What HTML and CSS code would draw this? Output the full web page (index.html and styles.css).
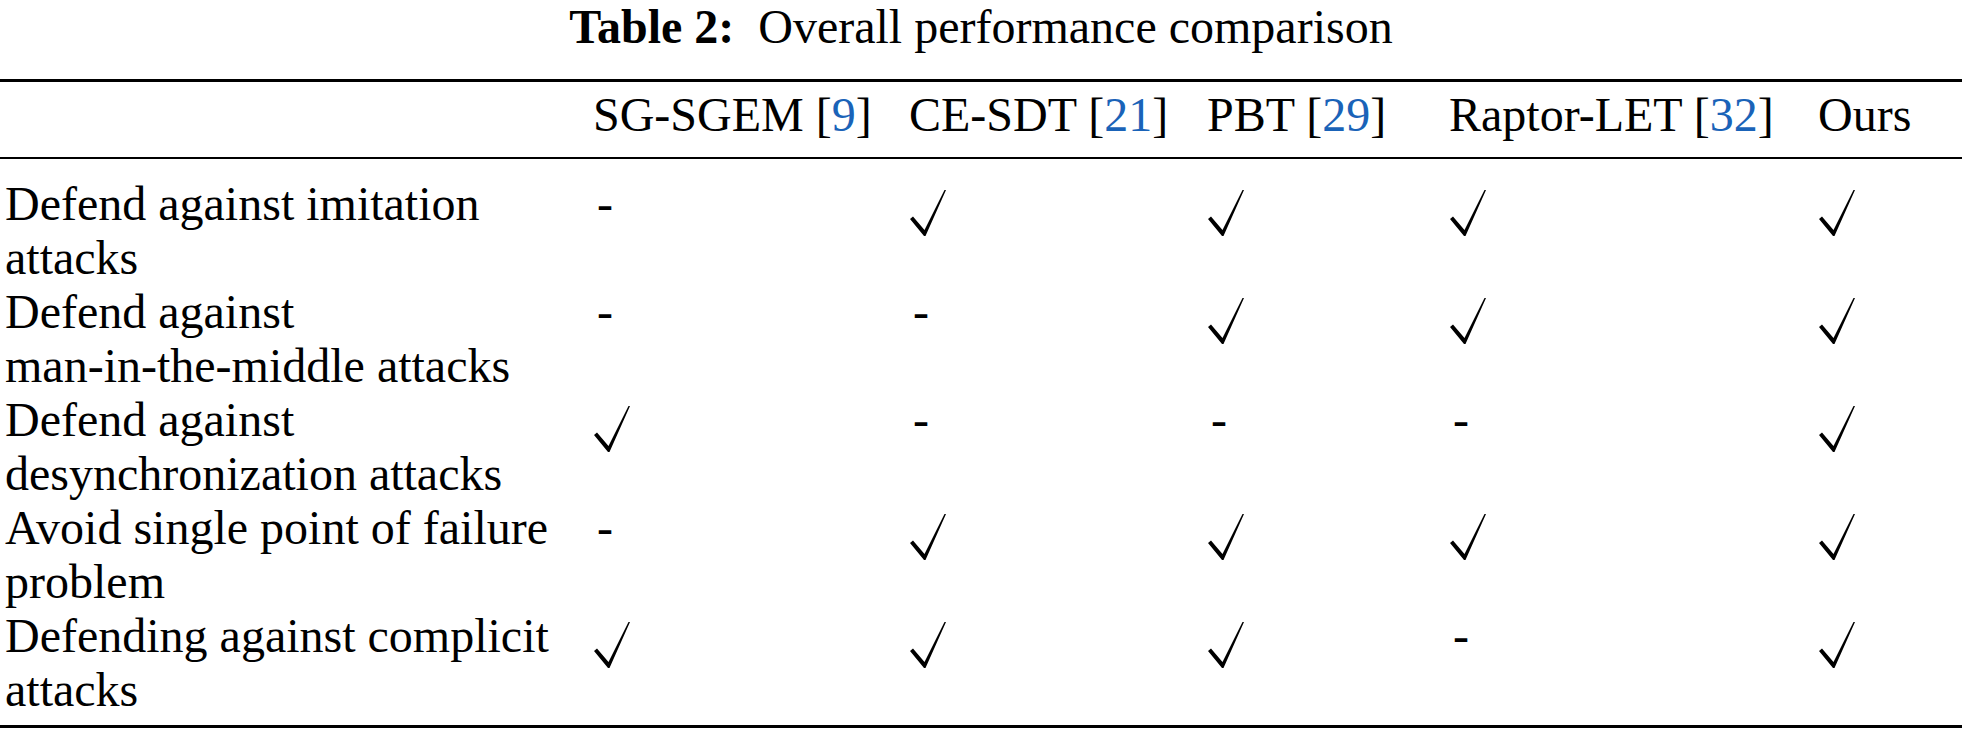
FILE: index.html
```html
<!DOCTYPE html>
<html lang="en">
  <head>
    <meta charset="UTF-8" />
    <meta name="viewport" content="width=device-width, initial-scale=1.0" />
    <title>Table 2: Overall performance comparison</title>
    <link rel="stylesheet" href="styles.css">
  </head>
  <body>
    <div class="table-wrap">
      <div class="caption"><b>Table 2:</b>&nbsp; Overall performance comparison</div>

      <table class="perf">
        <colgroup>
          <col class="c-label" />
          <col class="c-sg" />
          <col class="c-ce" />
          <col class="c-pbt" />
          <col class="c-raptor" />
          <col class="c-ours" />
        </colgroup>
        <thead>
          <tr>
            <th></th>
            <th>SG-SGEM [<span class="ref">9</span>]</th>
            <th>CE-SDT [<span class="ref">21</span>]</th>
            <th>PBT [<span class="ref">29</span>]</th>
            <th>Raptor-LET [<span class="ref">32</span>]</th>
            <th>Ours</th>
          </tr>
        </thead>
        <tbody>
          <!-- yes = check mark, no = dash -->
          <tr>
            <td class="label">Defend against imitation<br />attacks</td>
            <td><span class="no">-</span></td>
            <td><span class="yes"></span></td>
            <td><span class="yes"></span></td>
            <td><span class="yes"></span></td>
            <td><span class="yes"></span></td>
          </tr>
          <tr>
            <td class="label">Defend against<br />man-in-the-middle attacks</td>
            <td><span class="no">-</span></td>
            <td><span class="no">-</span></td>
            <td><span class="yes"></span></td>
            <td><span class="yes"></span></td>
            <td><span class="yes"></span></td>
          </tr>
          <tr>
            <td class="label">Defend against<br />desynchronization attacks</td>
            <td><span class="yes"></span></td>
            <td><span class="no">-</span></td>
            <td><span class="no">-</span></td>
            <td><span class="no">-</span></td>
            <td><span class="yes"></span></td>
          </tr>
          <tr>
            <td class="label">Avoid single point of failure<br />problem</td>
            <td><span class="no">-</span></td>
            <td><span class="yes"></span></td>
            <td><span class="yes"></span></td>
            <td><span class="yes"></span></td>
            <td><span class="yes"></span></td>
          </tr>
          <tr>
            <td class="label">Defending against complicit<br />attacks</td>
            <td><span class="yes"></span></td>
            <td><span class="yes"></span></td>
            <td><span class="yes"></span></td>
            <td><span class="no">-</span></td>
            <td><span class="yes"></span></td>
          </tr>
        </tbody>
      </table>
    </div>

    <script>
      /* Fill every "yes" cell with the same check mark */
      const checkSvg =
        '<svg width="37" height="46" viewBox="0 0 37 46">' +
        '<polygon points="1,29 4,26.5 15.5,40 35.5,0 37,0 16.5,46 15,46" fill="#000"/></svg>';
      document.querySelectorAll(".yes").forEach(function (cell) {
        cell.innerHTML = checkSvg;
      });
    </script>
  </body>
</html>
```

FILE: styles.css
```css
/* Page */
body {
  margin: 0;
  background: #fff;
  color: #000;
  font-family: "Liberation Serif", "Times New Roman", serif;
  font-size: 48px;
}

.table-wrap {
  width: 1962px;
}

/* Caption above the table */
.caption {
  text-align: center;
  line-height: 54px;
  height: 79px;
  box-sizing: border-box;
}

/* Table with booktabs-style rules */
.perf {
  width: 100%;
  border-collapse: collapse;
  table-layout: fixed;
  border-top: 3px solid #000;
  border-bottom: 3px solid #000;
}

.c-label { width: 593px; }
.c-sg { width: 316px; }
.c-ce { width: 298px; }
.c-pbt { width: 242px; }
.c-raptor { width: 369px; }
.c-ours { width: 144px; }

.perf th {
  font-weight: normal;
  text-align: left;
  white-space: nowrap;
  line-height: 54px;
  padding: 6px 0 15px 0;
  border-bottom: 2px solid #000;
}

.perf td {
  text-align: left;
  vertical-align: top;
  line-height: 54px;
  padding: 0;
  white-space: nowrap;
}

.perf tbody tr:first-child td {
  padding-top: 18px;
}

.perf tbody tr:last-child td {
  padding-bottom: 8px;
}

.perf .label {
  padding-left: 5px;
}

/* Citation numbers */
.ref {
  color: #1a63b8;
}

/* Check mark sits a little lower than the text line */
.yes {
  display: inline-block;
  margin-top: 13px;
  height: 46px;
  line-height: 0;
}

.no {
  padding-left: 4px;
}
```
